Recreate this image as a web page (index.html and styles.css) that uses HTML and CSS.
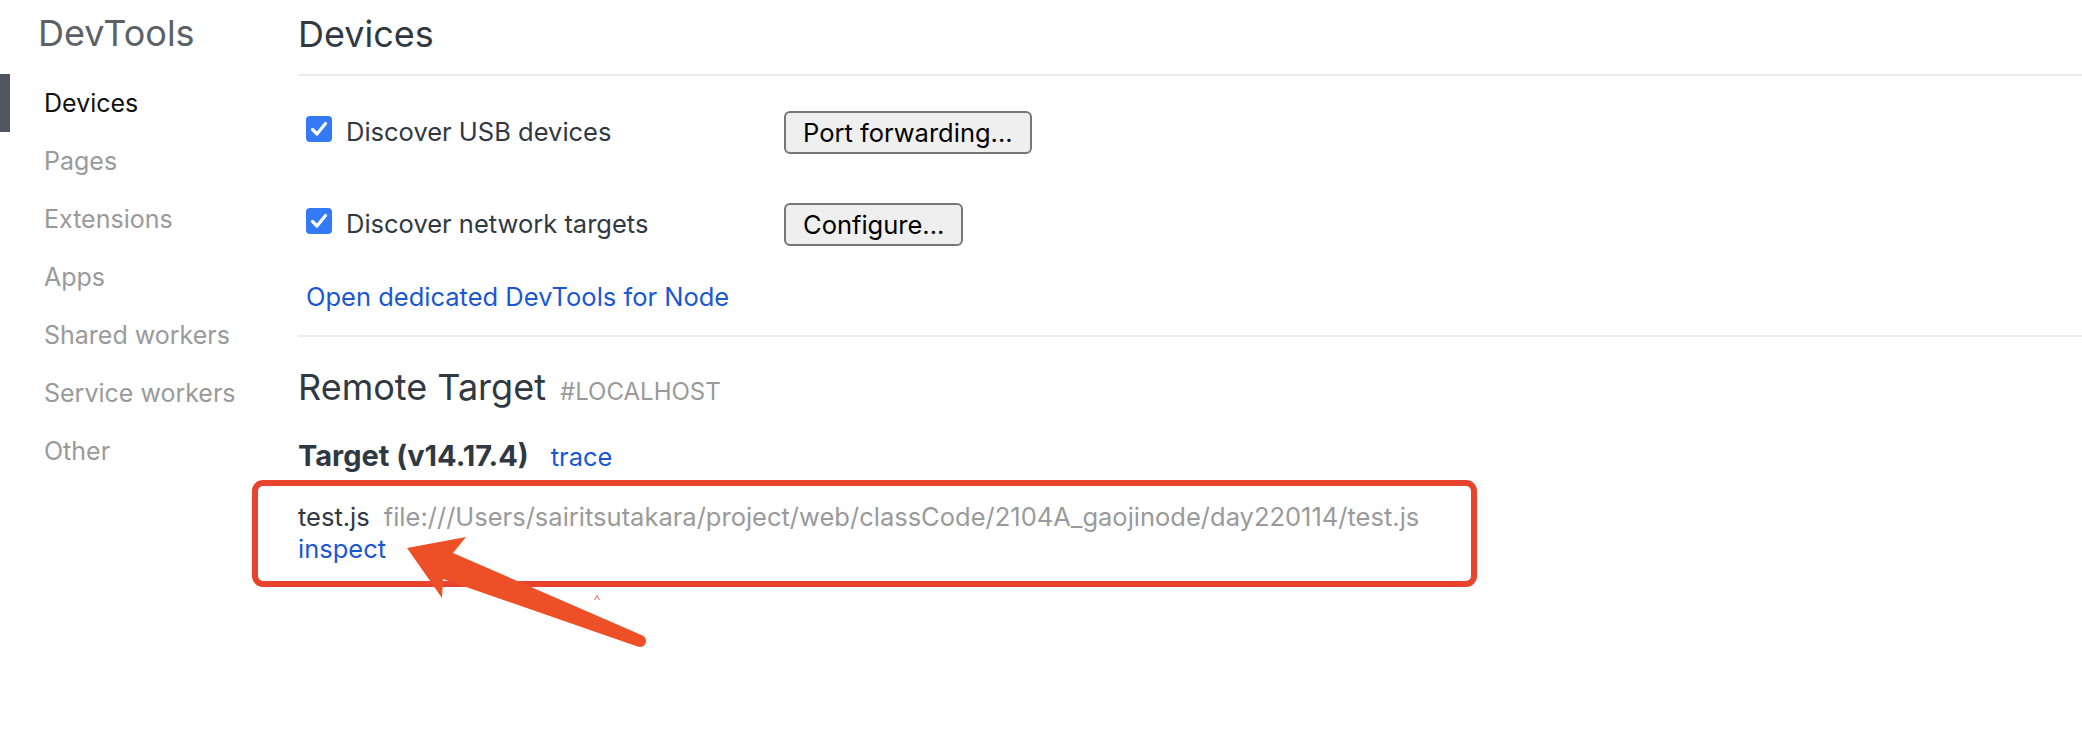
FILE: index.html
```html
<!DOCTYPE html>
<html lang="en">
<head>
<meta charset="utf-8">
<title>Inspect with Chrome Developer Tools</title>
<link rel="stylesheet" href="styles.css">
</head>
<body>
<div class="app">
  <aside class="sidebar">
    <h1 class="brand">DevTools</h1>
    <nav class="nav">
      <div class="nav-item active">Devices</div>
      <div class="nav-item">Pages</div>
      <div class="nav-item">Extensions</div>
      <div class="nav-item">Apps</div>
      <div class="nav-item">Shared workers</div>
      <div class="nav-item">Service workers</div>
      <div class="nav-item">Other</div>
    </nav>
  </aside>

  <main class="main">
    <header class="page-head">
      <h2 class="page-title">Devices</h2>
    </header>

    <section class="devices">
      <div class="option-row">
        <label class="option">
          <span class="checkbox"><svg viewBox="0 0 26 26" width="26" height="26"><rect x="0" y="0" width="26" height="26" rx="4" fill="#3479f6"/><path d="M6.5 13.5 L11 18 L19.5 7.5" fill="none" stroke="#fff" stroke-width="3.2" stroke-linecap="round" stroke-linejoin="round"/></svg></span>
          <span class="option-label">Discover USB devices</span>
        </label>
        <button class="btn">Port forwarding...</button>
      </div>
      <div class="option-row">
        <label class="option">
          <span class="checkbox"><svg viewBox="0 0 26 26" width="26" height="26"><rect x="0" y="0" width="26" height="26" rx="4" fill="#3479f6"/><path d="M6.5 13.5 L11 18 L19.5 7.5" fill="none" stroke="#fff" stroke-width="3.2" stroke-linecap="round" stroke-linejoin="round"/></svg></span>
          <span class="option-label">Discover network targets</span>
        </label>
        <button class="btn">Configure...</button>
      </div>
      <a class="link node-link" href="#">Open dedicated DevTools for Node</a>
    </section>

    <section class="remote">
      <h2 class="remote-title">Remote Target <span class="hash">#LOCALHOST</span></h2>
      <div class="target-head">
        <span class="target-name">Target (v14.17.4)</span>
        <a class="link" href="#">trace</a>
      </div>
      <div class="target-item">
        <div class="target-line">
          <span class="file-name">test.js</span>
          <span class="file-url">file:///Users/sairitsutakara/project/web/classCode/2104A_gaojinode/day220114/test.js</span>
        </div>
        <a class="link" href="#">inspect</a>
      </div>
    </section>
  </main>

  <div class="annot-box"></div>
  <svg class="annot-arrow" width="2082" height="742" viewBox="0 0 2082 742">
    <polygon points="407,548 466,537 453,553 642.5,635.5 637.5,646.5 443,579 442,598" fill="#ed5026"/>
    <circle cx="640" cy="641" r="6" fill="#ed5026"/>
    <polyline points="594.5,600 597,595.5 599.5,600" fill="none" stroke="#ef6a55" stroke-width="1"/>
  </svg>
</div>
</body>
</html>
```

FILE: styles.css
```css
* {
  box-sizing: border-box;
}

html, body {
  margin: 0;
  padding: 0;
  background: #ffffff;
}

body {
  font-family: Inter, "Liberation Sans", Arial, sans-serif;
  color: #303942;
  width: 2082px;
  height: 742px;
  overflow: hidden;
}

.app {
  position: relative;
  display: flex;
  width: 2082px;
  height: 742px;
}

/* Sidebar */
.sidebar {
  width: 298px;
  flex: none;
  padding-top: 11px;
}

.brand {
  margin: 0 0 19px 0;
  padding-left: 38px;
  font-size: 36px;
  line-height: 44px;
  font-weight: 400;
  color: #5c6168;
}

.nav {
  display: flex;
  flex-direction: column;
}

.nav-item {
  height: 58px;
  line-height: 58px;
  font-size: 25px;
  color: #9a9a9a;
  border-left: 10px solid transparent;
  padding-left: 34px;
}

.nav-item.active {
  color: #111111;
  border-left-color: #4f5660;
}

/* Main */
.main {
  flex: 1;
  min-width: 0;
}

.page-head {
  padding-top: 12px;
  padding-bottom: 18px;
  border-bottom: 2px solid #ececec;
}

.page-title {
  margin: 0;
  font-size: 36px;
  line-height: 44px;
  font-weight: 400;
  color: #303942;
}

.devices {
  padding: 34px 0 20px 8px;
  border-bottom: 2px solid #ececec;
  display: flex;
  flex-direction: column;
  align-items: flex-start;
}

.option-row {
  display: flex;
  align-items: center;
  height: 44px;
  margin-bottom: 48px;
}

.option-row:nth-child(2) {
  margin-bottom: 33px;
}

.option {
  display: flex;
  align-items: center;
  width: 478px;
  font-size: 25.5px;
  line-height: 44px;
  color: #303942;
}

.checkbox {
  display: flex;
  width: 26px;
  height: 26px;
  margin-right: 14px;
  margin-bottom: 6px;
}

.btn {
  font-family: Inter, "Liberation Sans", Arial, sans-serif;
  font-size: 25.5px;
  color: #000000;
  background: #efefef;
  border: 2px solid #777777;
  border-radius: 6px;
  height: 43px;
  padding: 0 17px;
  line-height: 39px;
}

.link {
  color: #1a57d3;
  text-decoration: none;
}

.node-link {
  font-size: 25.5px;
  line-height: 36px;
}

.remote {
  padding: 28px 0 0 0;
}

.remote-title {
  margin: 0;
  font-size: 36px;
  line-height: 44px;
  height: 44px;
  font-weight: 400;
  color: #303942;
}

.hash {
  font-size: 24px;
  line-height: 1;
  color: #9a9a9a;
  margin-left: 4px;
}

.target-head {
  margin-top: 29px;
  display: flex;
  align-items: baseline;
  gap: 22px;
  font-size: 25.5px;
  line-height: 36px;
  height: 37px;
}

.target-name {
  font-size: 29px;
  font-weight: 700;
  color: #303942;
}

.target-item {
  margin-top: 26px;
  display: flex;
  flex-direction: column;
  align-items: flex-start;
  font-size: 25.5px;
  line-height: 32px;
}

.target-line {
  display: flex;
  gap: 14px;
}

.file-name {
  color: #303942;
}

.file-url {
  color: #9a9a9a;
}

/* Annotations laid over the screenshot */
.annot-box {
  position: absolute;
  left: 252px;
  top: 480px;
  width: 1225px;
  height: 107px;
  border: 6px solid #e8432c;
  border-radius: 11px;
  pointer-events: none;
}

.annot-arrow {
  position: absolute;
  left: 0;
  top: 0;
  pointer-events: none;
}
```
